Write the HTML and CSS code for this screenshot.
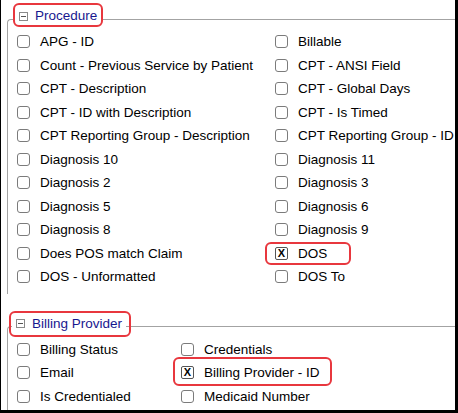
FILE: index.html
```html
<!DOCTYPE html>
<html lang="en">
<head>
    <meta charset="UTF-8">
    <meta name="viewport" content="width=device-width, initial-scale=1.0">
    <title>Report Fields</title>
    <link rel="stylesheet" href="styles.css">
</head>
<body>
    <div class="frame">
        <fieldset class="group">
            <legend class="group-title mark mark-title">
                <svg class="toggle" width="9" height="9" viewBox="0 0 9 9"><rect x="0.5" y="0.5" width="8" height="8" fill="#fff" stroke="#8a8a8a"/><line x1="2" y1="4.5" x2="7" y2="4.5" stroke="#555"/></svg>Procedure
            </legend>
            <div class="fields fields-wide">
                <label class="field"><span class="box"></span>APG - ID</label>
                <label class="field"><span class="box"></span>Billable</label>
                <label class="field"><span class="box"></span>Count - Previous Service by Patient</label>
                <label class="field"><span class="box"></span>CPT - ANSI Field</label>
                <label class="field"><span class="box"></span>CPT - Description</label>
                <label class="field"><span class="box"></span>CPT - Global Days</label>
                <label class="field"><span class="box"></span>CPT - ID with Description</label>
                <label class="field"><span class="box"></span>CPT - Is Timed</label>
                <label class="field"><span class="box"></span>CPT Reporting Group - Description</label>
                <label class="field"><span class="box"></span>CPT Reporting Group - ID</label>
                <label class="field"><span class="box"></span>Diagnosis 10</label>
                <label class="field"><span class="box"></span>Diagnosis 11</label>
                <label class="field"><span class="box"></span>Diagnosis 2</label>
                <label class="field"><span class="box"></span>Diagnosis 3</label>
                <label class="field"><span class="box"></span>Diagnosis 5</label>
                <label class="field"><span class="box"></span>Diagnosis 6</label>
                <label class="field"><span class="box"></span>Diagnosis 8</label>
                <label class="field"><span class="box"></span>Diagnosis 9</label>
                <label class="field"><span class="box"></span>Does POS match Claim</label>
                <label class="field mark mark-dos"><span class="box checked">X</span>DOS</label>
                <label class="field"><span class="box"></span>DOS - Unformatted</label>
                <label class="field"><span class="box"></span>DOS To</label>
            </div>
        </fieldset>

        <fieldset class="group group-billing">
            <legend class="group-title mark mark-title2">
                <svg class="toggle" width="9" height="9" viewBox="0 0 9 9"><rect x="0.5" y="0.5" width="8" height="8" fill="#fff" stroke="#8a8a8a"/><line x1="2" y1="4.5" x2="7" y2="4.5" stroke="#555"/></svg>Billing Provider
            </legend>
            <div class="fields fields-narrow">
                <label class="field"><span class="box"></span>Billing Status</label>
                <label class="field"><span class="box"></span>Credentials</label>
                <label class="field"><span class="box"></span>Email</label>
                <label class="field mark mark-bpid"><span class="box checked">X</span>Billing Provider - ID</label>
                <label class="field"><span class="box"></span>Is Credentialed</label>
                <label class="field"><span class="box"></span>Medicaid Number</label>
            </div>
        </fieldset>
    </div>
</body>
</html>
```

FILE: styles.css
```css
body {
    margin: 0;
    padding: 0;
    font-family: "Liberation Sans", Arial, sans-serif;
    font-size: 13.5px;
    color: #000;
    background-color: #fff;
}
.frame {
    width: 458px;
    height: 413px;
    box-sizing: border-box;
    border-left: 1px solid #000;
    border-right: 3px solid #000;
    border-bottom: 3px solid #000;
    padding-left: 6px;
    overflow: hidden;
    background-color: #fff;
}
.group {
    margin: 8px 0 0 0;
    padding: 0 0 5px 9px;
    border: 1px solid #a3a3a3;
    border-right: none;
    border-bottom: none;
    border-top-left-radius: 4px;
}
.group-billing {
    margin-top: 22px;
}
.group-title {
    margin-left: -2px;
    padding: 0 4px 6px 4px;
    line-height: 16px;
    color: #17178f;
    display: flex;
    align-items: center;
}
.group-billing .group-title {
    margin-left: -5px;
}
.toggle {
    margin-right: 7px;
    flex: none;
}
.fields {
    display: grid;
    grid-auto-rows: 23.5px;
}
.fields-wide {
    grid-template-columns: 258px 1fr;
}
.fields-narrow {
    grid-template-columns: 164px 1fr;
}
.field {
    display: flex;
    align-items: center;
    white-space: nowrap;
    justify-self: start;
}
.box {
    width: 13px;
    height: 13px;
    box-sizing: border-box;
    border: 1px solid #7b7b7b;
    border-radius: 3px;
    background-color: #fff;
    margin-right: 10px;
    flex: none;
}
.box.checked {
    border-color: #555;
    border-radius: 2px;
    font-size: 11px;
    font-weight: bold;
    line-height: 11px;
    text-align: center;
}
/* red annotation frames drawn over the screenshot */
.mark {
    position: relative;
}
.mark::after {
    content: "";
    position: absolute;
    border: 2px solid #e8373e;
    border-radius: 6px;
    pointer-events: none;
}
.mark-title::after {
    top: -5px;
    bottom: 3px;
    left: -2px;
    right: -2px;
}
.mark-title2::after {
    top: -5px;
    bottom: 1px;
    left: -3px;
    right: -5px;
}
.mark-dos::after {
    top: 0;
    bottom: 0;
    left: -10px;
    right: -24px;
}
.mark-bpid::after {
    top: -4px;
    bottom: -1px;
    left: -8px;
    right: -12px;
}
```
